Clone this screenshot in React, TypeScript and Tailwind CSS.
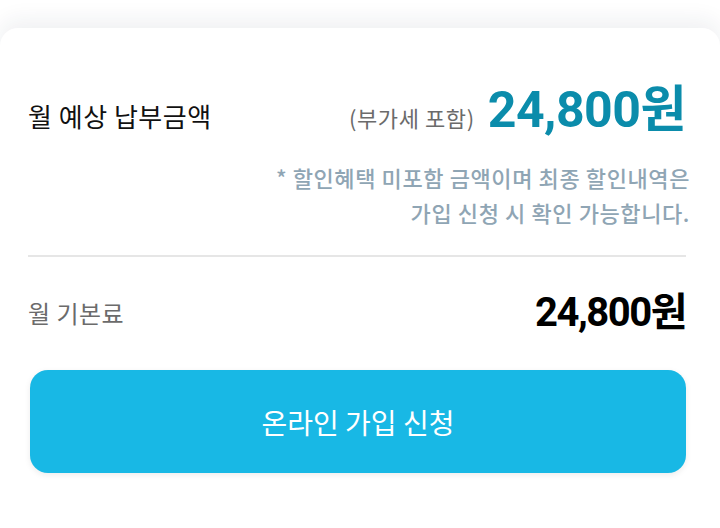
import React from "react";

const kr = "font-['Noto_Sans_CJK_KR',sans-serif]";
const num = "font-['Roboto','Noto_Sans_CJK_KR',sans-serif]";

const PriceRow: React.FC<{ label: string; price: string }> = ({ label, price }) => {
    return (
        <div className="flex items-center justify-between h-[58px]">
            <span className={`${kr} text-[24px] text-[#6b6b6b] tracking-[0.5px]`}>{label}</span>
            <span className={`${num} text-[40px] leading-none font-bold text-black tracking-[-1.5px]`}>
                {price}
            </span>
        </div>
    );
};

export default function App() {
    return (
        <div className="min-h-[528px] w-[720px] bg-white pt-[28px] overflow-hidden">
            <div className="bg-white rounded-t-[18px] shadow-[0_-8px_22px_rgba(30,40,70,0.07)] pl-[28px] pr-[34px] pt-[57px] pb-[55px]">
                <div className="flex items-baseline justify-between">
                    <span className={`${kr} text-[26px] text-[#111] tracking-[0.5px]`}>월 예상 납부금액</span>
                    <div className="flex items-baseline gap-[13px]">
                        <span className={`${kr} text-[22px] text-[#6b6b6b] tracking-[0.6px]`}>(부가세 포함)</span>
                        <span className={`${num} text-[50px] leading-none font-bold text-[#0b8cab] tracking-[-0.5px]`}>
                            24,800원
                        </span>
                    </div>
                </div>

                <p className={`${kr} mt-[25px] -mr-[4px] text-right text-[22px] leading-[35px] font-medium text-[#8fa5b4] tracking-[0.6px]`}>
                    * 할인혜택 미포함 금액이며 최종 할인내역은
                    <br />
                    가입 신청 시 확인 가능합니다.
                </p>

                <div className="mt-[25px] h-[2px] bg-[#e6e6e6]" />

                <div className="mt-[27px]">
                    <PriceRow label="월 기본료" price="24,800원" />
                </div>

                <button
                    className={`${kr} mt-[28px] ml-[2px] w-[656px] h-[103px] rounded-[18px] bg-[#18b8e5] text-white text-[28px] shadow-[0_2px_6px_rgba(0,0,0,0.08)]`}
                >
                    온라인 가입 신청
                </button>
            </div>
        </div>
    );
}
